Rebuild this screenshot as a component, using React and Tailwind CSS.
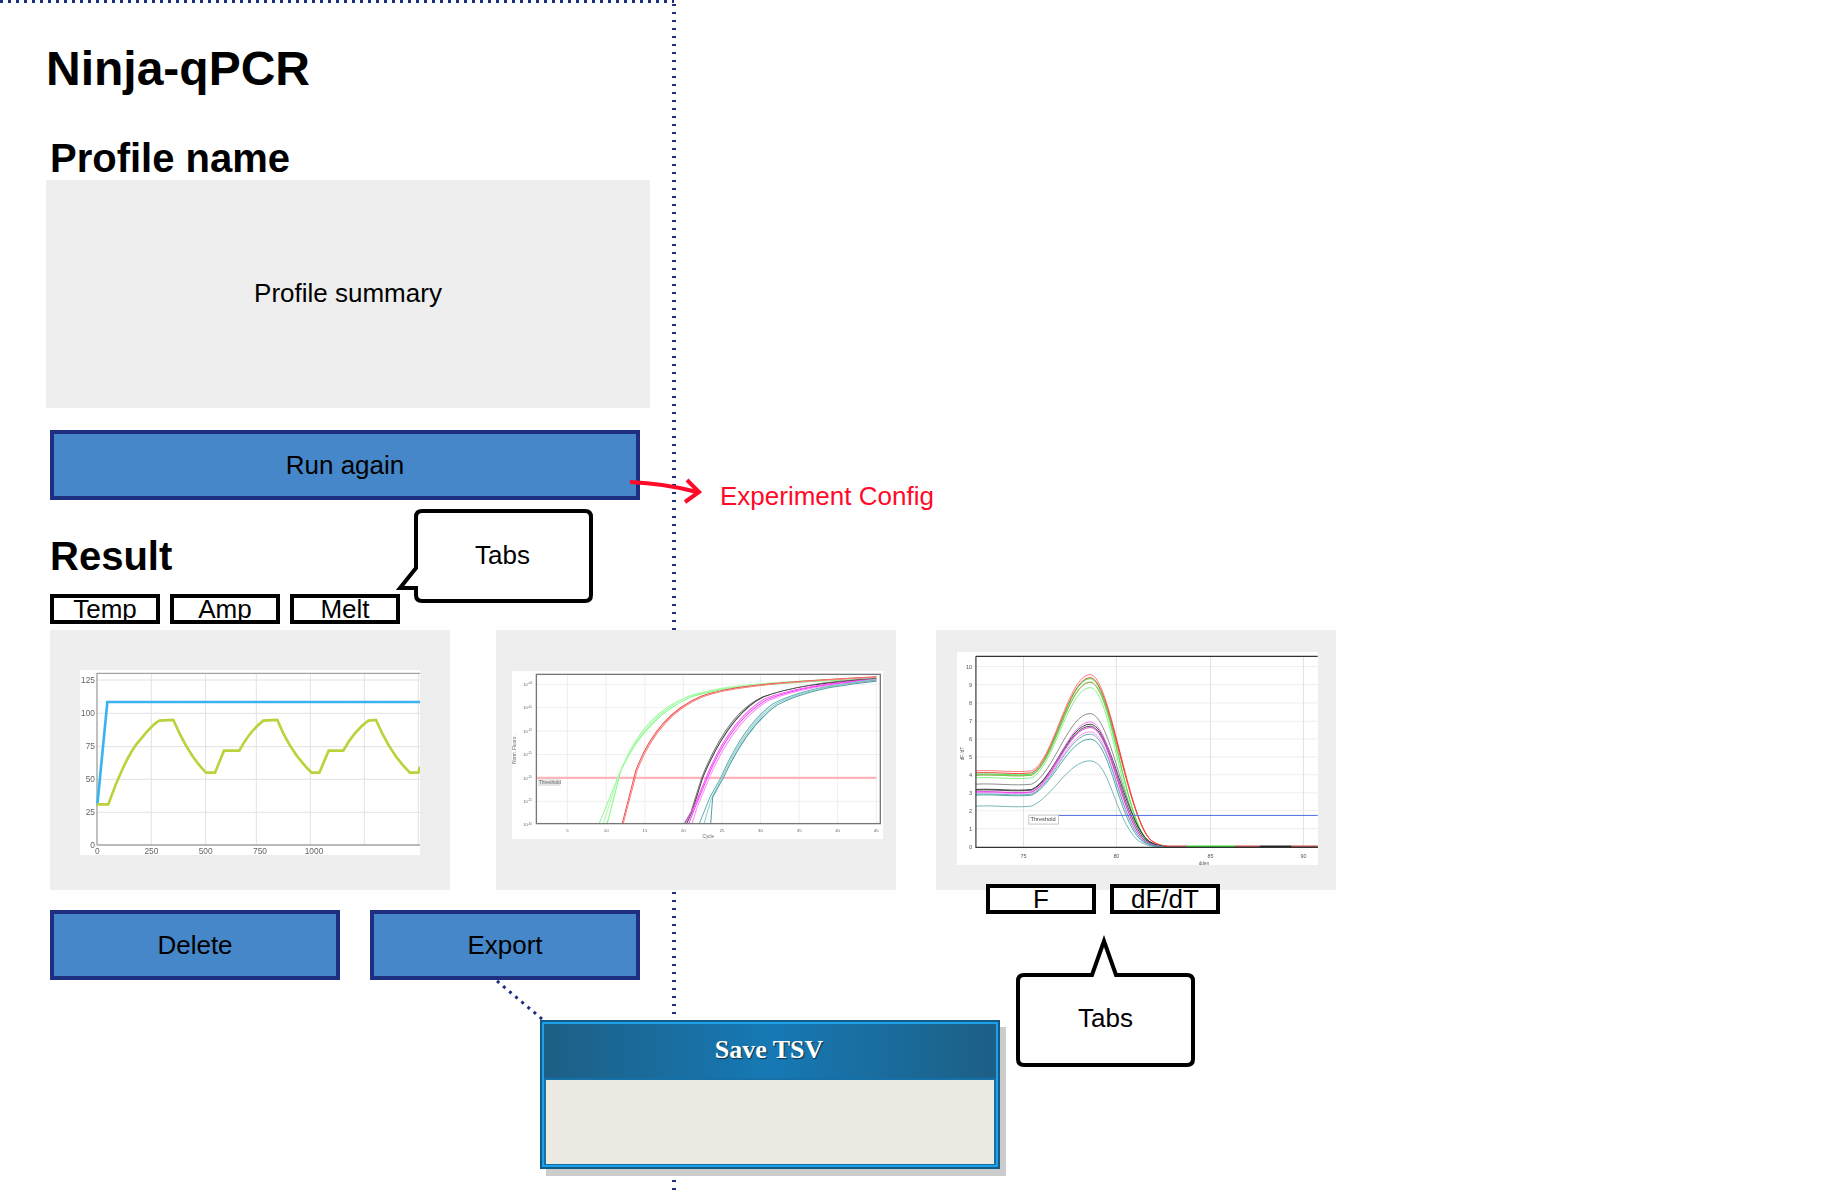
const navy = "#1e2f7f";

// chart 1: temperature trace
const TempChart = () => {
    const hGrid = [180, 280, 380, 478, 577];
    const vGrid = [334, 497, 649, 811, 973, 1135];
    const yLabels = [["125", 190], ["100", 288], ["75", 388], ["50", 486], ["25", 586], ["0", 684]];
    const xLabels = [["0", 172], ["250", 334], ["500", 497], ["750", 660], ["1000", 822]];
    return (
        <svg viewBox="120 150 1020 555" className="w-full h-full blur-[0.5px]">
            {hGrid.map((y) => <line key={y} x1="170" x2="1140" y1={y} y2={y} stroke="#e2e2e2" strokeWidth="3" />)}
            {vGrid.map((x) => <line key={x} x1={x} x2={x} y1="160" y2="675" stroke="#e2e2e2" strokeWidth="3" />)}
            <path d="M171 675 V160 H1140 M171 675 H1140" fill="none" stroke="#a2a2a2" strokeWidth="4" />
            <path d="M172 555 L202 246 H1140" fill="none" stroke="#3ab4f0" strokeWidth="8" />
            <path d="M215 241 H1140" fill="none" stroke="#ffffff" strokeWidth="2" strokeDasharray="4 34 2 60" />
            <path
                d="M170 553 L205 553 C 230 480, 270 390, 300 360 C 320 335, 340 310, 358 302 L400 300 C 430 370, 460 420, 498 458 L525 458 L552 392 L598 392 C 620 350, 640 325, 670 302 L712 300 C 740 370, 780 425, 815 458 L838 458 L866 392 L910 392 C 930 355, 960 320, 985 302 L1008 300 C 1040 375, 1075 425, 1110 458 L1135 458 L1140 440"
                fill="none" stroke="#bcd23c" strokeWidth="8" />
            <g fontSize="25" fill="#666" fontFamily="'Liberation Sans', sans-serif">
                {yLabels.map(([t, y]) => <text key={t} x="165" y={y} textAnchor="end">{t}</text>)}
                {xLabels.map(([t, x]) => <text key={t} x={x} y="702" textAnchor="middle">{t}</text>)}
            </g>
        </svg>
    );
};

// chart 2: amplification curves
const ampCurves = [
    ["#90f890", "M328 610 L385 470 C 430 350, 500 265, 590 232 C 680 200, 800 188, 1158 172"],
    ["#7dfa7d", "M352 610 L392 455 C 440 345, 515 270, 600 232 C 690 202, 800 190, 1158 176"],
    ["#b0fbb0", "M340 610 L388 462 C 435 350, 508 270, 596 228 C 686 198, 800 186, 1158 174"],
    ["#f05050", "M397 610 L438 450 C 480 340, 545 265, 635 228 C 700 205, 800 188, 1158 170"],
    ["#f88080", "M400 610 L442 450 C 484 342, 548 267, 638 230 C 702 207, 800 190, 1158 172"],
    ["#777777", "M583 610 L603 575 L635 473 C 680 360, 740 265, 815 232 C 900 200, 1000 185, 1158 175"],
    ["#444444", "M590 610 L606 575 L638 473 C 684 362, 745 268, 820 230 C 905 200, 1000 187, 1158 177"],
    ["#f050f0", "M585 610 L612 560 L648 473 C 692 365, 748 280, 826 235 C 908 205, 1000 190, 1158 178"],
    ["#ff30ff", "M596 610 L616 560 L652 473 C 696 367, 752 282, 832 238 C 912 207, 1000 192, 1158 180"],
    ["#f890f8", "M606 610 L622 560 L658 473 C 702 370, 758 285, 838 240 C 916 209, 1000 194, 1158 182"],
    ["#60b0b0", "M628 610 L660 530 L692 473 C 730 385, 780 300, 850 250 C 930 210, 1020 195, 1158 180"],
    ["#90cccc", "M642 610 L664 535 L696 473 C 734 387, 786 302, 856 252 C 934 212, 1020 197, 1158 178"],
    ["#50a0a0", "M662 610 L668 530 L700 473 C 738 390, 790 305, 860 255 C 938 214, 1020 199, 1158 184"],
];

const AmpChart = () => {
    const vGrid = [233, 349, 465, 580, 696, 811, 927, 1042, 1158];
    const hGrid = [193, 263, 333, 403, 543];
    const exps = ["+00", "-05", "-10", "-15", "-20", "-25", "-30"];
    const xLabels = [[5, 233], [10, 349], [15, 465], [20, 580], [25, 696], [30, 811], [35, 927], [40, 1042], [45, 1158]];
    return (
        <svg viewBox="67 153 1111 503" className="w-full h-full blur-[0.6px]">
            {vGrid.map((x) => <line key={x} x1={x} x2={x} y1="165" y2="610" stroke="#e6e6e6" strokeWidth="2" />)}
            {hGrid.map((y) => <line key={y} x1="140" x2="1170" y1={y} y2={y} stroke="#eeeeee" strokeWidth="3" />)}
            <line x1="142" x2="1158" y1="473" y2="473" stroke="#ffb4ba" strokeWidth="6" />
            {ampCurves.map(([c, d]) => <path key={d} d={d} fill="none" stroke={c} strokeWidth="3" />)}
            <rect x="140" y="163" width="1030" height="447" fill="none" stroke="#777777" strokeWidth="4" />
            <rect x="145" y="476" width="67" height="21" fill="#e6e6e6" />
            <g fill="#666" fontFamily="'Liberation Sans', sans-serif">
                <text x="147" y="491" fontSize="15">Threshold</text>
                {exps.map((e, i) => (
                    <text key={e} x="101" y={198 + i * 70} fontSize="12">10<tspan fontSize="8" dy="-5">{e}</tspan></text>
                ))}
                {xLabels.map(([t, x]) => <text key={t} x={x} y="635" fontSize="13" textAnchor="middle">{t}</text>)}
                <text x="655" y="652" fontSize="14" textAnchor="middle">Cycle</text>
                <text x="79" y="388" fontSize="14" textAnchor="middle" transform="rotate(-90 79 388)">Norm. Fluoro.</text>
            </g>
        </svg>
    );
};

// chart 3: melt curves, one hump per sample
const meltCurves = [
    ["#ff6060", 452, 163, 662], ["#f02020", 458, 172, 662], ["#ff4040", 465, 186, 662],
    ["#30e030", 462, 175, 652], ["#50e850", 465, 185, 652], ["#70f070", 473, 202, 647],
    ["#777777", 492, 280, 652], ["#222222", 508, 312, 652], ["#333333", 510, 318, 647],
    ["#f060f0", 515, 305, 642], ["#e020e0", 516, 322, 642], ["#f880f8", 518, 335, 637],
    ["#50a8a8", 522, 342, 637], ["#309898", 525, 357, 632], ["#60a8a8", 558, 422, 622],
];

const meltPath = (y0, peak, x1) =>
    `M137 ${y0} C 200 ${y0 - 3}, 250 ${y0 + 6}, 305 ${y0} C 370 ${y0 - 30}, 415 ${peak}, 480 ${peak} C 540 ${peak}, ${x1 - 70} 590, ${x1} 660 C ${x1 + 20} 675, ${x1 + 40} 680, ${x1 + 70} 680 H1164`;

const MeltChart = () => {
    const hGrid = [139, 193, 248, 303, 356, 410, 464, 518, 572, 626];
    const vGrid = [280, 559, 842, 1121];
    const xLabels = [[75, 280], [80, 559], [85, 842], [90, 1121]];
    return (
        <svg viewBox="81 95 1083 640" className="w-full h-full blur-[0.5px]">
            {hGrid.map((y) => <line key={y} x1="137" x2="1164" y1={y} y2={y} stroke="#eeeeee" strokeWidth="3" />)}
            {vGrid.map((x) => <line key={x} x1={x} x2={x} y1="110" y2="680" stroke="#e2e2e2" strokeWidth="3" />)}
            {meltCurves.map(([c, y0, peak, x1]) => (
                <path key={peak} d={meltPath(y0, peak, x1)} fill="none" stroke={c} strokeWidth="2.5" />
            ))}
            <line x1="385" x2="1164" y1="586" y2="586" stroke="#5068e0" strokeWidth="3" />
            <path d="M700 679 H770 M915 679 H990 M1085 679 H1164" stroke="#c05050" strokeWidth="5" />
            <path d="M770 679 H915" stroke="#30d030" strokeWidth="5" />
            <path d="M990 679 H1085" stroke="#222222" strokeWidth="5" />
            <path d="M137 108 V682 H1164 M137 108 H1164" fill="none" stroke="#333333" strokeWidth="3.5" />
            <rect x="296" y="585" width="89" height="27" fill="#ffffff" stroke="#bbbbbb" strokeWidth="2.5" />
            <g fill="#555" fontFamily="'Liberation Sans', sans-serif">
                <text x="301" y="604" fontSize="17" fill="#444">Threshold</text>
                {[10, 9, 8, 7, 6, 5, 4, 3, 2, 1, 0].map((n, i) => (
                    <text key={n} x="126" y={145 + i * 54.1} fontSize="17" textAnchor="end">{n}</text>
                ))}
                {xLabels.map(([t, x]) => <text key={t} x={x} y="713" fontSize="16" textAnchor="middle">{t}</text>)}
                <text x="822" y="735" fontSize="14" textAnchor="middle">dden</text>
                <text x="101" y="400" fontSize="14" textAnchor="middle" transform="rotate(-90 101 400)">dF /dT</text>
            </g>
        </svg>
    );
};

const ActionButton = ({ className, children }) => (
    <button className={`h-[70px] bg-[#4587c9] border-4 border-[#1e2f7f] text-black text-[26px] ${className}`}>
        {children}
    </button>
);

const Tab = ({ children }) => (
    <div className="w-[110px] h-[30px] border-4 border-black bg-white flex items-center justify-center text-[26px] leading-none text-black">
        {children}
    </div>
);

const Callout = ({ className, viewBox, d, children, textClass }) => (
    <div className={`absolute z-20 ${className}`}>
        <svg viewBox={viewBox} className="absolute inset-0 w-full h-full">
            <path d={d} fill="#ffffff" stroke="#000000" strokeWidth="4" strokeMiterlimit="8" />
        </svg>
        <span className={`absolute text-[26px] leading-none text-black ${textClass}`}>{children}</span>
    </div>
);

const App = () => {
    return (
        <div className="relative w-[1834px] h-[1190px] overflow-hidden bg-white [font-family:'Liberation_Sans',Arial,sans-serif]">

            {/* dotted screen borders sit behind everything */}
            <div className="absolute left-0 top-0 w-[674px] h-[3px] bg-[repeating-linear-gradient(to_right,#1e2f7f_0,#1e2f7f_3px,transparent_3px,transparent_8px)]"></div>
            <div className="absolute left-[672px] top-[-4px] w-[4px] h-[1194px] bg-[repeating-linear-gradient(to_bottom,#1e2f7f_0,#1e2f7f_2px,transparent_2px,transparent_8px)]"></div>

            <div className="relative flex flex-col items-start pt-[41px]">
                <h1 className="ml-[46px] text-[48px] leading-[56px] font-bold text-black">Ninja-qPCR</h1>
                <h2 className="ml-[50px] mt-[38px] text-[40px] leading-[46px] font-bold text-black h-[45px]">Profile name</h2>

                <div className="ml-[46px] w-[604px] h-[228px] bg-[#eeeeee] flex items-center justify-center pb-[2px] text-[26px] text-black">
                    Profile summary
                </div>

                <ActionButton className="ml-[50px] mt-[22px] w-[590px]">Run again</ActionButton>

                <h2 className="ml-[50px] mt-[33px] h-[61px] text-[40px] leading-[46px] font-bold text-black">Result</h2>

                <div className="ml-[50px] flex gap-[10px]">
                    <Tab>Temp</Tab>
                    <Tab>Amp</Tab>
                    <Tab>Melt</Tab>
                </div>

                <div className="ml-[50px] mt-[6px] flex items-start h-[260px]">
                    <div className="w-[400px] h-[260px] bg-[#eeeeee] pl-[30px] pt-[40px]">
                        <div className="w-[340px] h-[185px] bg-white"><TempChart /></div>
                    </div>
                    <div className="ml-[46px] w-[400px] h-[260px] bg-[#eeeeee] pl-[16px] pt-[41px]">
                        <div className="w-[371px] h-[168px] bg-white"><AmpChart /></div>
                    </div>
                    <div className="ml-[40px] w-[400px] flex flex-col">
                        <div className="h-[260px] bg-[#eeeeee] pl-[21px] pt-[22px]">
                            <div className="w-[361px] h-[213px] bg-white"><MeltChart /></div>
                        </div>
                        <div className="relative ml-[50px] mt-[-6px] flex gap-[14px]">
                            <Tab>F</Tab>
                            <Tab>dF/dT</Tab>
                        </div>
                    </div>
                </div>

                <div className="ml-[50px] mt-[20px] flex gap-[30px]">
                    <ActionButton className="w-[290px]">Delete</ActionButton>
                    <ActionButton className="w-[270px]">Export</ActionButton>
                </div>
            </div>

            {/* annotations drawn over the wireframe */}
            <svg viewBox="0 0 1834 1190" className="absolute inset-0 w-[1834px] h-[1190px] pointer-events-none">
                <path d="M630 482 C 655 483, 678 487, 697 492" fill="none" stroke="#ff0a28" strokeWidth="4" />
                <path d="M687 480 L699 492 L685 502" fill="none" stroke="#ff0a28" strokeWidth="4" />
                <path d="M497 981 L542 1019" fill="none" stroke={navy} strokeWidth="3" strokeDasharray="3 5" />
            </svg>

            <span className="absolute left-[720px] top-[481px] text-[26px] leading-[30px] text-[#ff0a28]">Experiment Config</span>

            <Callout
                className="left-[394px] top-[507px] w-[201px] h-[98px]"
                viewBox="394 507 201 98"
                d="M422 511 H585 Q591 511 591 517 V595 Q591 601 585 601 H422 Q416 601 416 595 V588 H400 L416 568 V517 Q416 511 422 511 Z"
                textClass="left-[81px] top-[35px]"
            >
                Tabs
            </Callout>

            <Callout
                className="left-[1014px] top-[930px] w-[183px] h-[139px]"
                viewBox="1014 930 183 139"
                d="M1024 975 H1092 L1104 941 L1116 975 H1187 Q1193 975 1193 981 V1059 Q1193 1065 1187 1065 H1024 Q1018 1065 1018 1059 V981 Q1018 975 1024 975 Z"
                textClass="left-[64px] top-[75px]"
            >
                Tabs
            </Callout>

            {/* Save TSV dialog */}
            <div className="absolute z-10 left-[540px] top-[1020px] w-[460px] h-[149px] border-2 border-[#125a88] shadow-[6px_7px_0_#cccccc]">
                <div className="h-full flex flex-col border-2 border-[#1ea0e8]">
                    <div className="h-[54px] flex items-center justify-center pb-[4px] pr-[2px] bg-[linear-gradient(to_right,#1d5f85,#1679b5_50%,#1d5f85)] text-white text-[26px] font-bold [font-family:'Liberation_Serif',serif] [text-shadow:1px_1px_1px_#0b3048]">
                        Save TSV
                    </div>
                    <div className="flex-1 bg-[#ece9e3] border-t-2 border-x-2 border-b border-[#1570a8]"></div>
                </div>
            </div>
        </div>
    );
};

export default App;
